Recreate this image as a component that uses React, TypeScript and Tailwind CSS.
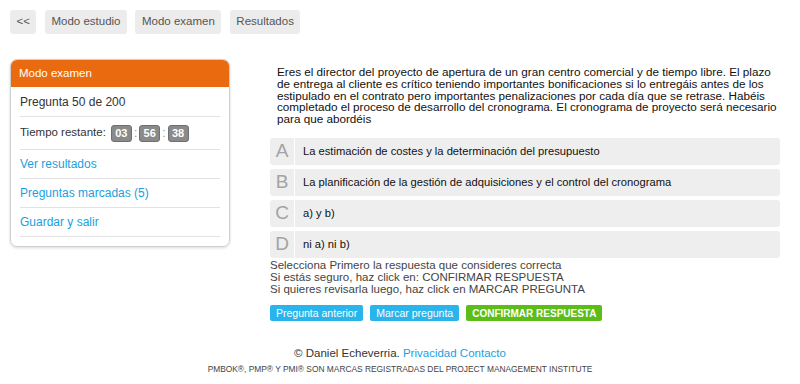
import React from 'react';

const navItems = ['<<', 'Modo estudio', 'Modo examen', 'Resultados'];

const options = [
  { letter: 'A', text: 'La estimación de costes y la determinación del presupuesto' },
  { letter: 'B', text: 'La planificación de la gestión de adquisiciones y el control del cronograma' },
  { letter: 'C', text: 'a) y b)' },
  { letter: 'D', text: 'ni a) ni b)' },
];

const TimeBox: React.FC<{ value: string }> = ({ value }) => (
  <span className="inline-flex h-[17px] w-[21px] items-center justify-center rounded-[3px] border border-[#6f6f6f] bg-[#8a8a8a] text-[11px] font-bold text-white">
    {value}
  </span>
);

const App: React.FC = () => {
  return (
    <div className="h-[384px] w-[800px] overflow-hidden bg-white font-['Liberation_Sans',Arial,sans-serif] text-[#333]">
      {/* top nav */}
      <div className="flex gap-[8.5px] px-[10px] pt-[10px]">
        {navItems.map((item) => (
          <a
            key={item}
            href="#"
            className="flex h-[24px] items-center rounded-[3px] bg-[#ececec] px-[6.5px] text-[11.5px] text-[#555]"
          >
            {item}
          </a>
        ))}
      </div>

      <div className="flex pt-[25px]">
        {/* sidebar */}
        <div className="ml-[10px] w-[220px]">
          <div className="overflow-hidden rounded-[7px] border border-[#d0d0d0] shadow-[0_1px_3px_rgba(0,0,0,0.15)]">
            <div className="flex h-[27px] items-center bg-[#ea6a0f] px-[8px] text-[11.5px] text-white">Modo examen</div>
            <div className="px-[9px] pb-[9px] text-[12px]">
              <div className="flex h-[30px] items-center border-b border-[#e2e2e2]">Pregunta 50 de 200</div>
              <div className="flex h-[33px] items-center gap-[2px] border-b border-[#e2e2e2]">
                <span className="mr-[3px] text-[11.5px]">Tiempo restante:</span>
                <TimeBox value="03" />
                <span className="text-[#999]">:</span>
                <TimeBox value="56" />
                <span className="text-[#999]">:</span>
                <TimeBox value="38" />
              </div>
              <div className="flex h-[29px] items-center border-b border-[#e2e2e2] text-[#1a9fdf]">Ver resultados</div>
              <div className="flex h-[29px] items-center border-b border-[#e2e2e2] text-[#1a9fdf]">Preguntas marcadas (5)</div>
              <div className="flex h-[29px] items-center border-b border-[#e2e2e2] text-[#1a9fdf]">Guardar y salir</div>
            </div>
          </div>
        </div>

        {/* main */}
        <div className="ml-[40px] w-[510px]">
          <p className="mt-[7px] w-[508px] pl-[7px] text-[11.7px] leading-[11.8px] text-[#111]">
            Eres el director del proyecto de apertura de un gran centro comercial y de tiempo libre. El plazo de entrega al
            cliente es crítico teniendo importantes bonificaciones si lo entregáis antes de los estipulado en el contrato
            pero importantes penalizaciones por cada día que se retrase. Habéis completado el proceso de desarrollo del
            cronograma. El cronograma de proyecto será necesario para que abordéis
          </p>

          <div className="mt-[13px] flex flex-col gap-[4px]">
            {options.map((o) => (
              <div key={o.letter} className="flex h-[27px] rounded-[3px] bg-[#eeeeee]">
                <div className="flex w-[25px] items-center justify-center border-r border-white text-[19px] text-[#a3a3a3]">
                  {o.letter}
                </div>
                <div className="flex items-center pl-[8px] text-[11.2px] text-[#111]">{o.text}</div>
              </div>
            ))}
          </div>

          <div className="mt-[2px] text-[11.5px] leading-[11.8px] text-[#444]">
            <p>Selecciona Primero la respuesta que consideres correcta</p>
            <p>Si estás seguro, haz click en: CONFIRMAR RESPUESTA</p>
            <p>Si quieres revisarla luego, haz click en MARCAR PREGUNTA</p>
          </div>

          <div className="mt-[10px] flex gap-[7px]">
            <button className="h-[16px] rounded-[2px] bg-[#2ab4ec] px-[6px] text-[10.5px] text-white">Pregunta anterior</button>
            <button className="h-[16px] rounded-[2px] bg-[#2ab4ec] px-[6px] text-[10.5px] text-white">Marcar pregunta</button>
            <button className="h-[16px] rounded-[2px] bg-[#5cbd17] px-[6px] text-[10px] font-bold text-white">
              CONFIRMAR RESPUESTA
            </button>
          </div>
        </div>
      </div>

      {/* footer */}
      <div className="mt-[24px] text-center">
        <p className="text-[11.5px] text-[#333]">
          © Daniel Echeverria. <a href="#" className="text-[#1a9fdf]">Privacidad</a>{' '}
          <a href="#" className="text-[#1a9fdf]">Contacto</a>
        </p>
        <p className="text-[8.4px] text-[#444]">
          PMBOK®, PMP® Y PMI® SON MARCAS REGISTRADAS DEL PROJECT MANAGEMENT INSTITUTE
        </p>
      </div>
    </div>
  );
};

export default App;
